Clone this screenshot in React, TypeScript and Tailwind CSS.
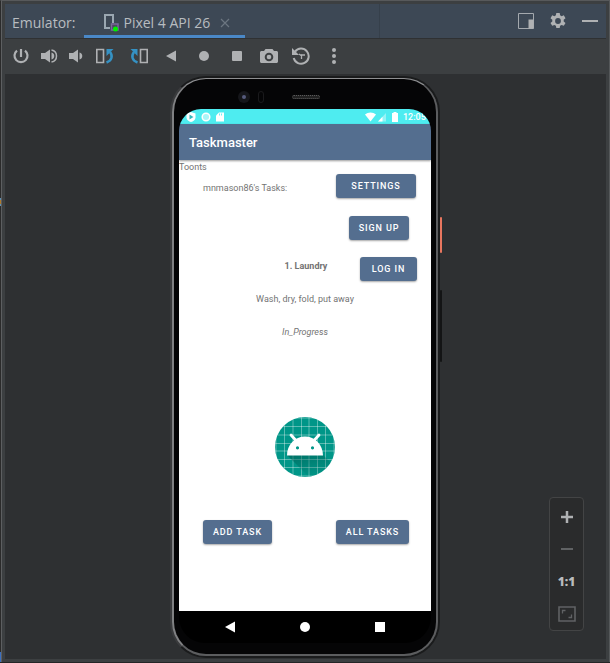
import React from "react";

type IconButtonProps = {
  label: string;
  className: string;
  children: React.ReactNode;
};

function IconButton({ label, className, children }: IconButtonProps) {
  return (
    <button
      type="button"
      aria-label={label}
      className={`flex h-full items-center justify-center ${className}`}
    >
      {children}
    </button>
  );
}

function TaskButton({ className, children }: { className: string; children: React.ReactNode }) {
  return (
    <button
      type="button"
      className={`flex h-6 items-center justify-center rounded-[3px] bg-[#546e8f] text-[9px] leading-3 font-medium tracking-widest text-white uppercase shadow-[0_1px_2px_rgba(0,0,0,0.35)] ${className}`}
    >
      {children}
    </button>
  );
}

function TabDeviceIcon() {
  return (
    <svg width="16" height="20" viewBox="0 0 16 20">
      <path d="M1 1h10v9H9V3H3v11h4v2H1z" fill="#9aa7b1" />
      <path d="M8.500 11h6.500v6H8.500z" fill="#4d4763" stroke="#7a6799" strokeWidth="1.500" />
      <circle cx="12.500" cy="16" r="2.500" fill="#00f000" />
    </svg>
  );
}

function DockIcon() {
  return (
    <svg width="16" height="16" viewBox="0 0 16 16">
      <path d="M.5.5h15v15H.5z" fill="none" stroke="#a4a9ae" />
      <path d="M10.500 6.500h5v9h-5z" fill="#afb1b3" />
    </svg>
  );
}

function GearIcon() {
  return (
    <svg width="16" height="16" viewBox="0 0 16 16" fill="#afb1b3">
      <path
        fillRule="evenodd"
        d="M6.300 0h3.400l.4 2.300 1.500.9 2.200-.9 1.700 2.900-1.800 1.500v1.700l1.800 1.500-1.700 2.900-2.200-.8-1.500.8-.4 2.300H6.300l-.4-2.300-1.500-.8-2.200.8-1.700-2.900 1.800-1.500V6.700L.5 5.200l1.700-2.900 2.200.9 1.500-.9zM8 5.100a2.900 2.900 0 1 0 0 5.800 2.900 2.900 0 0 0 0-5.800z"
      />
    </svg>
  );
}

function PowerIcon() {
  return (
    <svg width="16" height="16" viewBox="0 0 16 16" fill="none" stroke="#afb1b3" strokeWidth="2.200">
      <path d="M8 1v8" />
      <path d="M4 2.600a6.500 6.500 0 1 0 8 0" />
    </svg>
  );
}

function VolumeUpIcon() {
  return (
    <svg width="18" height="16" viewBox="0 0 18 16">
      <path d="M0 5h4l5-3.500v13L4 11H0z" fill="#afb1b3" />
      <path d="M10.500 4.500v7a3.600 3.600 0 0 0 0-7z" fill="#afb1b3" />
      <path d="M10.500 2a6.100 6.100 0 0 1 0 12" fill="none" stroke="#afb1b3" strokeWidth="1.500" />
    </svg>
  );
}

function VolumeDownIcon() {
  return (
    <svg width="14" height="16" viewBox="0 0 14 16" fill="#afb1b3">
      <path d="M0 5h4l5-3.500v13L4 11H0z" />
      <path d="M10.500 4.500v7a3.600 3.600 0 0 0 0-7z" />
    </svg>
  );
}

function RotateIcon({ flipped }: { flipped?: boolean }) {
  return (
    <svg width="18" height="16" viewBox="0 0 18 16" fill="none">
      <g transform={flipped ? "translate(18 0) scale(-1 1)" : undefined}>
        <path d="M.8 1.500h6.700v13H.8z" stroke="#afb1b3" strokeWidth="1.600" />
        <path d="M14 4c3 4 2 8.500-3.500 10.500" stroke="#3592c4" strokeWidth="2.500" />
        <path d="M10.500 1v7L17.500 1z" fill="#3592c4" />
      </g>
    </svg>
  );
}

function CameraIcon() {
  return (
    <svg width="18" height="16" viewBox="0 0 18 16">
      <path
        fillRule="evenodd"
        fill="#afb1b3"
        d="M5.500 1h7L14 3h2.500c.8 0 1.500.7 1.500 1.500v9c0 .8-.7 1.500-1.500 1.500h-15C.7 15 0 14.300 0 13.500v-9C0 3.700.7 3 1.500 3H4zM9 4.700a4.300 4.300 0 1 0 0 8.600 4.300 4.300 0 0 0 0-8.600z"
      />
      <circle cx="9" cy="9" r="2.300" fill="#afb1b3" />
    </svg>
  );
}

function HistoryIcon() {
  return (
    <svg width="18" height="18" viewBox="0 0 18 18" fill="none" stroke="#afb1b3">
      <path d="M3 4.600A7.600 7.600 0 1 1 1.700 11" strokeWidth="2" />
      <path d="M0 1v7h7z" fill="#afb1b3" stroke="none" />
      <path d="M7 7l2.800 2M13 8H9.500v4" strokeWidth="1.300" />
    </svg>
  );
}

function KebabIcon() {
  return (
    <svg width="4" height="16" viewBox="0 0 4 16" fill="#afb1b3">
      <circle cx="2" cy="2" r="2" />
      <circle cx="2" cy="8" r="2" />
      <circle cx="2" cy="14" r="2" />
    </svg>
  );
}

function BackShape({ className }: { className: string }) {
  return (
    <svg width="10" height="12" viewBox="0 0 10 12" className={className}>
      <path d="M10 .5v11L0 6z" fill="currentColor" />
    </svg>
  );
}

function AndroidLogo() {
  const lines = [1, 9.5, 18, 26.5, 34, 42.5, 50.5, 59];
  return (
    <svg width="60" height="60" viewBox="0 0 60 60" role="img" aria-label="Android">
      <defs>
        <clipPath id="disc">
          <circle cx="30" cy="30" r="30" />
        </clipPath>
        <linearGradient id="cast" x1="0" y1="0" x2="0.600" y2="1">
          <stop offset="0" stopColor="#00594f" stopOpacity="0.600" />
          <stop offset="1" stopColor="#00594f" stopOpacity="0" />
        </linearGradient>
      </defs>
      <g clipPath="url(#disc)">
        <path d="M0 0h60v60H0z" fill="#009688" />
        {lines.map((p) => (
          <path key={p} d={`M${p} 0v60M0 ${p}h60`} stroke="#fff" strokeOpacity="0.450" strokeWidth="0.800" />
        ))}
        <path d="M12 38h36l12 12v10H34z" fill="url(#cast)" />
      </g>
      <path d="M16 18l5 5.500M44 18l-5 5.500" stroke="#fff" strokeWidth="2.800" strokeLinecap="round" />
      <path
        fillRule="evenodd"
        fill="#fff"
        d="M12 38.500c0-11 8-19 18-19s18 8 18 19zM22.500 29.200a1.600 1.600 0 1 0 0 3.200 1.600 1.600 0 0 0 0-3.200zm15 0a1.600 1.600 0 1 0 0 3.200 1.600 1.600 0 0 0 0-3.200z"
      />
    </svg>
  );
}

function StatusBar() {
  return (
    <div className="flex h-[15px] items-center justify-between bg-[#4eecf0] pl-[7px] text-white">
      <div className="flex items-center gap-[5px]">
        <svg width="10" height="10" viewBox="0 0 10 10">
          <path d="M5 0l4.500 1.500v4C9.500 8 7 9.500 5 10 3 9.500.5 8 .5 5.500v-4z" fill="#fff" />
          <path d="M3.500 2.500l4 2.500-4 2.500z" fill="#35b9bd" />
        </svg>
        <svg width="10" height="10" viewBox="0 0 10 10">
          <circle cx="5" cy="5" r="3.800" fill="#a9f5f7" stroke="#fff" strokeWidth="1.500" />
        </svg>
        <svg width="8" height="10" viewBox="0 0 8 10">
          <path d="M3 .5h5v9H0v-6z" fill="#fff" />
          <path d="M3.500 1.500v2M5.500 1.500v2" stroke="#4eecf0" strokeWidth="0.800" />
        </svg>
      </div>
      <div className="flex items-center">
        <svg width="11" height="10" viewBox="0 0 11 10">
          <path d="M0 2.500C3-.3 8-.3 11 2.500L5.500 9.500z" fill="#fff" />
        </svg>
        <svg width="13" height="10" viewBox="0 0 13 10">
          <path d="M10 1v8.500H2z" fill="#fff" fillOpacity="0.400" />
          <path d="M6.500 4.700v4.800H2z" fill="#fff" />
        </svg>
        <svg width="12" height="10" viewBox="0 0 12 10">
          <path d="M4.500 0h3v1H9v9H3V1h1.500z" fill="#fff" />
        </svg>
        <time className="w-[30px] pl-0.5 text-[9px] leading-3 font-medium whitespace-nowrap">12:05</time>
      </div>
    </div>
  );
}

function Phone() {
  return (
    <div className="relative h-fit rounded-[36px] border-2 border-[#1a1b1c] border-l-[#3a3b3d]">
      <div className="absolute top-[139px] -right-1 h-9 w-0.5 rounded-sm bg-[#e8765f]" />
      <div className="absolute top-[212px] -right-1 h-[72px] w-0.5 rounded-sm bg-[#131415]" />
      <div className="rounded-[34px] border-2 border-t border-[#5c5d5f] border-t-[#8e8f91] border-l-[#808183] bg-[#050506] px-[5px] pt-px pb-[11px]">
        <div className="flex h-[29px] items-center pt-[5px]">
          <div className="ml-[59px] size-3 rounded-full bg-[#15161a] p-1">
            <div className="size-1 rounded-full bg-[#565b7d]" />
          </div>
          <div className="ml-2 h-3 w-1.5 rounded-full border border-[#1a1a1c]" />
          <div className="ml-7 h-1 w-7 rounded-sm border border-dotted border-[#5a5a5a] bg-[#222]" />
        </div>
        <div className="w-[252px] overflow-hidden rounded-t-[22px] rounded-b-[26px] bg-black font-['Roboto',sans-serif]">
          <StatusBar />
          <header className="relative flex h-9 items-center bg-[#546e8f] px-2.5 shadow-[0_1px_2px_rgba(0,0,0,0.4)]">
            <h1 className="pt-0.5 text-[13px] leading-4 font-medium text-white">Taskmaster</h1>
          </header>
          <main className="flex flex-col bg-white pb-[67px] text-[9px] text-[#737373]">
            <p className="leading-[14px]">Toonts</p>
            <div className="flex items-end justify-between pr-[15px] pl-6">
              <p className="leading-5">mnmason86's Tasks:</p>
              <TaskButton className="w-20">Settings</TaskButton>
            </div>
            <div className="flex justify-end pt-[18px] pr-[22px]">
              <TaskButton className="w-[60px]">Sign up</TaskButton>
            </div>
            <div className="grid grid-cols-[1fr_auto_1fr] items-start pt-[17px] pr-3.5 pl-4">
              <h2 className="col-start-2 leading-[18px] font-bold">1. Laundry</h2>
              <div className="flex justify-end">
                <TaskButton className="w-[57px]">Log in</TaskButton>
              </div>
            </div>
            <p className="pt-2 text-center leading-5">Wash, dry, fold, put away</p>
            <p className="pt-[13px] text-center leading-5 italic">In_Progress</p>
            <div className="flex justify-center pt-[75px]">
              <AndroidLogo />
            </div>
            <div className="flex justify-between pt-[43px] pr-[22px] pl-6">
              <TaskButton className="w-[69px]">Add task</TaskButton>
              <TaskButton className="w-[73px]">All tasks</TaskButton>
            </div>
          </main>
          <nav className="flex h-8 items-center justify-between px-[46px] text-white">
            <button type="button" aria-label="Back">
              <BackShape className="block" />
            </button>
            <button type="button" aria-label="Home" className="size-2.5 rounded-full bg-white" />
            <button type="button" aria-label="Overview" className="size-2.5 bg-white" />
          </nav>
        </div>
      </div>
    </div>
  );
}

function ZoomPanel() {
  return (
    <div className="absolute right-[22px] bottom-7 flex h-[134px] w-[35px] flex-col items-center rounded-[4px] border border-[#434445] bg-[#2a2b2c] pt-[3px]">
      <IconButton label="Zoom in" className="w-full">
        <svg width="14" height="14" viewBox="0 0 14 14">
          <path d="M7 1v12M1 7h12" stroke="#afb1b3" strokeWidth="2.500" />
        </svg>
      </IconButton>
      <IconButton label="Zoom out" className="w-full">
        <svg width="14" height="14" viewBox="0 0 14 14">
          <path d="M1 7h12" stroke="#606264" strokeWidth="2" />
        </svg>
      </IconButton>
      <button
        type="button"
        className="flex h-full w-full items-center justify-center font-['Open_Sans',sans-serif] text-[12px] leading-4 font-extrabold text-[#b9bbbd]"
      >
        1:1
      </button>
      <IconButton label="Zoom to fit" className="w-full">
        <svg width="18" height="16" viewBox="0 0 18 16" fill="none" stroke="#606264">
          <path d="M1 1h16v14H1z" strokeWidth="1.600" />
          <path d="M4.500 7.500v-3h3M13.500 8.500v3h-3" strokeWidth="1.300" />
        </svg>
      </IconButton>
    </div>
  );
}

export default function App() {
  return (
    <div className="relative border-t border-b border-l border-t-[#57595b] border-b-[#242526] border-l-[#2b2b2b] bg-[#3c3f41] font-['Open_Sans','Noto_Sans',sans-serif]">
      <div className="absolute top-[197px] -left-px h-2 w-px border-y-2 border-[#5f8fb0] bg-[#b07a2c]" />
      <div className="absolute bottom-0 -left-px h-2.5 w-px bg-[#3b6fc0]" />
      <div className="border-r border-l border-r-[#55585a] border-l-[#5d5f61] px-[3px] pt-[3px] pb-[3px]">
        <header className="flex h-[35px] items-stretch border-b border-[#2f3133] bg-[#3d4855] text-[14px] leading-5 text-[#b8bcc0]">
          <div className="flex items-center pt-1 pr-[9px] pl-[7px]">Emulator:</div>
          <div className="flex w-[161px] items-center border-b-[3px] border-[#4a88c7] pt-1.5 pl-[19px]">
            <TabDeviceIcon />
            <a href="#pixel" className="pl-1 whitespace-nowrap">Pixel 4 API 26</a>
            <button type="button" aria-label="Close tab" className="pl-2.5">
              <svg width="10" height="10" viewBox="0 0 10 10" className="block">
                <path d="M1 1l8 8M9 1L1 9" stroke="#6c7680" strokeWidth="1.200" />
              </svg>
            </button>
          </div>
          <div className="w-[135px] border-r border-[#36404b]" />
          <div className="ml-auto flex">
            <IconButton label="Window mode" className="w-8">
              <DockIcon />
            </IconButton>
            <IconButton label="Settings" className="w-8">
              <GearIcon />
            </IconButton>
            <IconButton label="Hide" className="w-8">
              <svg width="16" height="4" viewBox="0 0 16 4">
                <path d="M0 1h16v2H0z" fill="#afb1b3" />
              </svg>
            </IconButton>
          </div>
        </header>
        <div role="toolbar" className="flex h-[35px] items-center pb-0.5 pl-0.5">
          <IconButton label="Power" className="w-7">
            <PowerIcon />
          </IconButton>
          <IconButton label="Volume up" className="w-[30px]">
            <VolumeUpIcon />
          </IconButton>
          <IconButton label="Volume down" className="w-[22px]">
            <VolumeDownIcon />
          </IconButton>
          <IconButton label="Rotate left" className="w-9">
            <RotateIcon />
          </IconButton>
          <IconButton label="Rotate right" className="w-8">
            <RotateIcon flipped />
          </IconButton>
          <IconButton label="Back" className="w-8">
            <BackShape className="text-[#afb1b3]" />
          </IconButton>
          <IconButton label="Home" className="mx-px w-8">
            <span className="size-2.5 rounded-full bg-[#afb1b3]" />
          </IconButton>
          <IconButton label="Overview" className="w-8">
            <span className="size-2.5 rounded-[1px] bg-[#afb1b3]" />
          </IconButton>
          <IconButton label="Take screenshot" className="w-8">
            <CameraIcon />
          </IconButton>
          <IconButton label="Snapshots" className="w-8">
            <HistoryIcon />
          </IconButton>
          <IconButton label="More" className="ml-px w-8">
            <KebabIcon />
          </IconButton>
        </div>
        <div className="relative flex justify-center bg-[#2e3032] pt-0.5 pr-px pb-px">
          <Phone />
          <ZoomPanel />
        </div>
      </div>
    </div>
  );
}
